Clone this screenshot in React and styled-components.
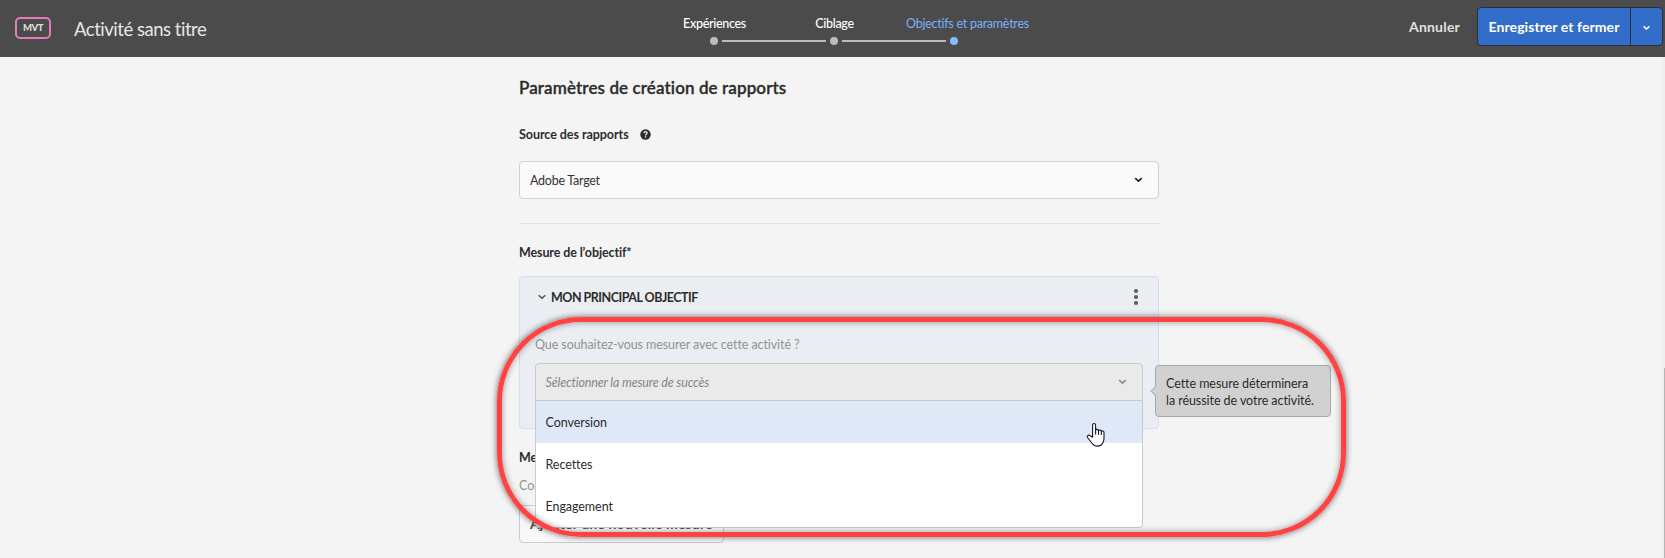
import React from 'react';
import styled, { createGlobalStyle } from 'styled-components';

const GlobalStyle = createGlobalStyle`
  * { box-sizing: border-box; }
  html, body { margin: 0; padding: 0; overflow: hidden; }
  body {
    background: #f4f4f4;
    color: #2c2c2c;
    font-family: Lato, "Open Sans", sans-serif;
    font-size: 12.5px;
    line-height: 20px;
  }
  h1, h2, h3, p, ul { margin: 0; padding: 0; font-weight: inherit; }
  button { font: inherit; padding: 0; margin: 0; cursor: pointer; }
`;

const Page = styled.div`
  position: relative;
  width: 1665px;
  height: 558px;
  display: flex;
  flex-direction: column;
  overflow: hidden;
  background: #f4f4f4;
`;

/* Header */
const Header = styled.header`
  flex: none;
  height: 57px;
  display: grid;
  grid-template-columns: 654px 360px 1fr;
  background: #4b4b4b;
`;
const Identity = styled.div`
  display: flex;
  align-items: center;
  gap: 23px;
  padding: 0 0 1px 15px;
`;
const Badge = styled.span`
  width: 36px;
  height: 22px;
  border: 2px solid #e57bbb;
  border-radius: 5px;
  color: #dcdcdc;
  font-size: 9.5px;
  font-weight: 900;
  line-height: 18px;
  letter-spacing: -0.5px;
  text-align: center;
`;
const Title = styled.h1`
  padding-top: 1px;
  color: #e6e6e6;
  font-size: 18.5px;
  line-height: 24px;
  letter-spacing: -0.48px;
`;
const Steps = styled.nav`
  padding-top: 14px;
`;
const StepLabels = styled.div`
  display: grid;
  grid-template-columns: repeat(3, 120px);
`;
const StepLabel = styled.span`
  padding-left: ${(p) => (p.$active ? '12px' : '1px')};
  color: ${(p) => (p.$active ? '#78b0fa' : '#ffffff')};
  font-weight: ${(p) => (p.$active ? 400 : 500)};
  letter-spacing: ${(p) => (p.$active ? '-0.25px' : '-0.3px')};
  text-align: ${(p) => (p.$active ? 'left' : 'center')};
  white-space: nowrap;
`;
const Track = styled.div`
  display: flex;
  align-items: center;
  gap: 4px;
  padding: 3px 0 0 56px;
`;
const Dot = styled.span`
  width: 8px;
  height: 8px;
  border-radius: 50%;
  background: ${(p) => (p.$active ? '#84bdff' : '#bcbcbc')};
`;
const Line = styled.span`
  width: 104px;
  height: 2px;
  background: #bcbcbc;
`;
const Actions = styled.div`
  display: flex;
  justify-content: flex-end;
  align-items: flex-start;
  gap: 17px;
  padding: 7px 2px 0 0;
`;
const CancelButton = styled.button`
  height: 39px;
  border: 0;
  background: none;
  color: #e0e0e0;
  font-size: 14px;
  font-weight: 700;
  letter-spacing: 0.2px;
`;
const SplitButton = styled.div`
  display: grid;
  grid-template-columns: 152px 32px;
  height: 39px;
  border: 1px solid #2b2f38;
  border-radius: 4px;
  background: #326dc9;
  overflow: hidden;
`;
const SaveButton = styled.button`
  border: 0;
  background: none;
  color: #fff;
  font-size: 14px;
  font-weight: 700;
  letter-spacing: 0.07px;
`;
const SaveMenuButton = styled.button`
  display: grid;
  place-items: center;
  padding-top: 3px;
  border: 0;
  border-left: 1px solid #2b2f38;
  background: none;
  color: #fff;
`;

/* Form */
const Content = styled.main`
  width: 640px;
  margin-left: 519px;
  padding-top: 19px;
`;
const Heading = styled.h2`
  font-size: 17px;
  font-weight: 600;
  line-height: 24px;
  letter-spacing: 0.1px;
  -webkit-text-stroke: 0.3px currentColor;
`;
const SourceLabel = styled.div`
  display: flex;
  align-items: center;
  gap: 11px;
  height: 20px;
  margin-top: 25px;
  font-weight: 700;
  line-height: 22px;
  letter-spacing: -0.05px;

  svg { margin-bottom: 1px; }
`;
const SelectBox = styled.div`
  display: flex;
  align-items: center;
  justify-content: space-between;
  height: 38px;
  padding: 2px 15px 0 ${(p) => (p.$open ? '9.5px' : '10px')};
  border: 1px solid ${(p) => (p.$open ? '#cacaca' : '#d0d0d0')};
  border-radius: ${(p) => (p.$open ? '4px 4px 0 0' : '4px')};
  background: ${(p) => (p.$open ? '#eaeaea' : '#fafafa')};
  color: ${(p) => (p.$open ? '#858585' : '#323232')};
  font-style: ${(p) => (p.$open ? 'italic' : 'normal')};
  letter-spacing: ${(p) => (p.$open ? '-0.15px' : '-0.25px')};

  svg { margin-bottom: 2px; }
`;
const SourceSelect = styled(SelectBox)`
  margin-top: 16px;
`;
const Divider = styled.hr`
  height: 1px;
  margin: 24px 0 18px;
  border: 0;
  background: #e1e1e1;
`;
const SectionTitle = styled.h3`
  height: 20px;
  font-size: 12.5px;
  font-weight: 700;
  line-height: 22px;
  letter-spacing: -0.12px;
`;
const GoalPanel = styled.section`
  height: 153px;
  margin: 14px 0 18px;
  padding: 10px 15px;
  border: 1px solid #d3deee;
  border-radius: 4px;
  background: #eaedf2;
`;
const GoalHeader = styled.div`
  display: flex;
  align-items: center;
  height: 20px;
  padding: 0 4px 0 3px;
`;
const GoalName = styled.span`
  flex: 1;
  height: 20px;
  margin-left: 5px;
  font-size: 12.5px;
  font-weight: 700;
  line-height: 22px;
  letter-spacing: -0.5px;
`;
const Question = styled.p`
  height: 20px;
  margin: 27px 0 9px;
  color: #929292;
  line-height: 22px;
  letter-spacing: -0.08px;
`;
const MetricField = styled.div`
  position: relative;
  width: 608px;
`;
const Menu = styled.ul`
  position: absolute;
  z-index: 2;
  top: 37px;
  left: 0;
  right: 0;
  border: 1px solid #cacaca;
  border-radius: 0 0 4px 4px;
  background: #fff;
  list-style: none;
`;
const MenuItem = styled.li`
  height: 42px;
  padding-left: 9.5px;
  background: ${(p) => (p.$hovered ? '#dfe8f7' : 'transparent')};
  line-height: 44px;
  letter-spacing: -0.06px;
`;
const Tooltip = styled.div`
  position: absolute;
  z-index: 3;
  top: 2px;
  left: 620px;
  width: 176px;
  height: 52px;
  padding: 9px 0 0 10px;
  border: 1px solid #a8a8a8;
  border-radius: 4px;
  background: #d1d1d1;
  color: #2b2b2b;
  line-height: 17px;
  letter-spacing: -0.06px;
  white-space: nowrap;

  &::before {
    content: '';
    position: absolute;
    top: 21px;
    left: -4px;
    width: 7px;
    height: 7px;
    border: solid #b4b4b4;
    border-width: 0 0 1px 1px;
    background: #d1d1d1;
    transform: rotate(45deg);
  }
`;
const Hint = styled.p`
  height: 20px;
  margin: 8px 0 10px;
  color: #929292;
  line-height: 22px;
`;
const AddButton = styled.button`
  width: 205px;
  height: 38px;
  padding-left: 10px;
  border: 1px solid #cacaca;
  border-radius: 4px;
  background: #f8f8f8;
  color: #4b4b4b;
  font-size: 14px;
  font-weight: 700;
  letter-spacing: 0.14px;
  text-align: left;
  white-space: nowrap;
`;

/* Overlays */
const Highlight = styled.div`
  position: absolute;
  z-index: 4;
  top: 317px;
  left: 497px;
  width: 849px;
  height: 220px;
  border: 5px solid #ff4343;
  border-radius: 84px;
  box-shadow: 0 0 6px rgba(0, 0, 0, 0.6), inset 0 0 6px rgba(0, 0, 0, 0.4);
  pointer-events: none;
`;
const Pointer = styled.svg`
  position: absolute;
  z-index: 3;
  top: 59px;
  left: 551px;
`;
const ScrollRail = styled.div`
  position: absolute;
  top: 57px;
  right: 0;
  bottom: 0;
  width: 3px;
  padding: 311px 0 0 2px;
  background: #efefef;
`;
const ScrollThumb = styled.div`
  height: 100%;
  background: #b5b5b5;
`;

const Chevron = ({ size = 8, color = 'currentColor', weight = 1.7 }) => (
  <svg width={size} height="6" viewBox="0 0 8 6" fill="none" stroke={color} strokeWidth={weight}>
    <path d="M.7 1.2 4 4.2l3.3-3" />
  </svg>
);

const HelpIcon = () => (
  <svg width="11" height="11" viewBox="0 0 11 11" fill="none">
    <circle cx="5.5" cy="5.5" r="5.2" fill="#2c2c2c" />
    <path d="M3.9 4.1c.1-1 .8-1.4 1.6-1.4.9 0 1.6.5 1.6 1.3 0 1-1.5 1.1-1.5 2.4" stroke="#f4f4f4" strokeWidth="1.3" />
    <path d="M4.9 7.3h1.4v1.3H4.9z" fill="#f4f4f4" />
  </svg>
);

const MoreIcon = () => (
  <svg width="6" height="18" viewBox="0 0 6 18" fill="#5c5c5c">
    <circle cx="3" cy="3" r="2.1" />
    <circle cx="3" cy="9" r="2.1" />
    <circle cx="3" cy="15" r="2.1" />
  </svg>
);

const options = ['Conversion', 'Recettes', 'Engagement'];

export default function App() {
  return (
    <Page>
      <GlobalStyle />
      <Header>
        <Identity>
          <Badge>MVT</Badge>
          <Title>Activité sans titre</Title>
        </Identity>
        <Steps>
          <StepLabels>
            <StepLabel>Expériences</StepLabel>
            <StepLabel>Ciblage</StepLabel>
            <StepLabel $active>Objectifs et paramètres</StepLabel>
          </StepLabels>
          <Track>
            <Dot />
            <Line />
            <Dot />
            <Line />
            <Dot $active />
          </Track>
        </Steps>
        <Actions>
          <CancelButton>Annuler</CancelButton>
          <SplitButton>
            <SaveButton>Enregistrer et fermer</SaveButton>
            <SaveMenuButton>
              <Chevron size={7} />
            </SaveMenuButton>
          </SplitButton>
        </Actions>
      </Header>

      <Content>
        <Heading>Paramètres de création de rapports</Heading>
        <SourceLabel>
          Source des rapports
          <HelpIcon />
        </SourceLabel>
        <SourceSelect>
          Adobe Target
          <Chevron size={9} color="#222" weight={1.7} />
        </SourceSelect>
        <Divider />
        <SectionTitle>Mesure de l’objectif*</SectionTitle>
        <GoalPanel>
          <GoalHeader>
            <Chevron color="#505050" weight={1.4} />
            <GoalName>MON PRINCIPAL OBJECTIF</GoalName>
            <MoreIcon />
          </GoalHeader>
          <Question>Que souhaitez-vous mesurer avec cette activité ?</Question>
          <MetricField>
            <SelectBox $open>
              Sélectionner la mesure de succès
              <Chevron size={9} color="#8a8a8a" weight={1.6} />
            </SelectBox>
            <Menu>
              {options.map((name, i) => (
                <MenuItem key={name} $hovered={i === 0}>
                  {name}
                </MenuItem>
              ))}
            </Menu>
            <Pointer width="20" height="26" viewBox="0 0 20 26">
              <path
                d="M6.6 15.2V3.1c0-2.1 3-2.1 3 0v5.2c.3-1.4 2.8-1.2 2.9.5.5-1.2 2.8-.9 2.8.7.7-1.1 2.7-.6 2.7 1v6.1c0 2-.7 2.7-1.2 4.2-.8 2.2-2.5 3.3-5.3 3.3-3.2 0-4.5-1-5.7-3.1L1.5 15.500c-1-1.8 1.2-3.1 2.700-1.700z"
                fill="#fff"
                stroke="#15152a"
                strokeWidth="1.1"
                strokeLinejoin="round"
              />
              <path d="M9.6 8v4.5M12.5 8.800v3.900M15.300 9.500v3.500" fill="none" stroke="#15152a" strokeWidth="1.1" />
            </Pointer>
            <Tooltip>
              Cette mesure déterminera
              <br />
              la réussite de votre activité.
            </Tooltip>
          </MetricField>
        </GoalPanel>
        <SectionTitle>Me</SectionTitle>
        <Hint>Con</Hint>
        <AddButton>Ajouter une nouvelle mesure</AddButton>
      </Content>

      <ScrollRail>
        <ScrollThumb />
      </ScrollRail>
      <Highlight />
    </Page>
  );
}
